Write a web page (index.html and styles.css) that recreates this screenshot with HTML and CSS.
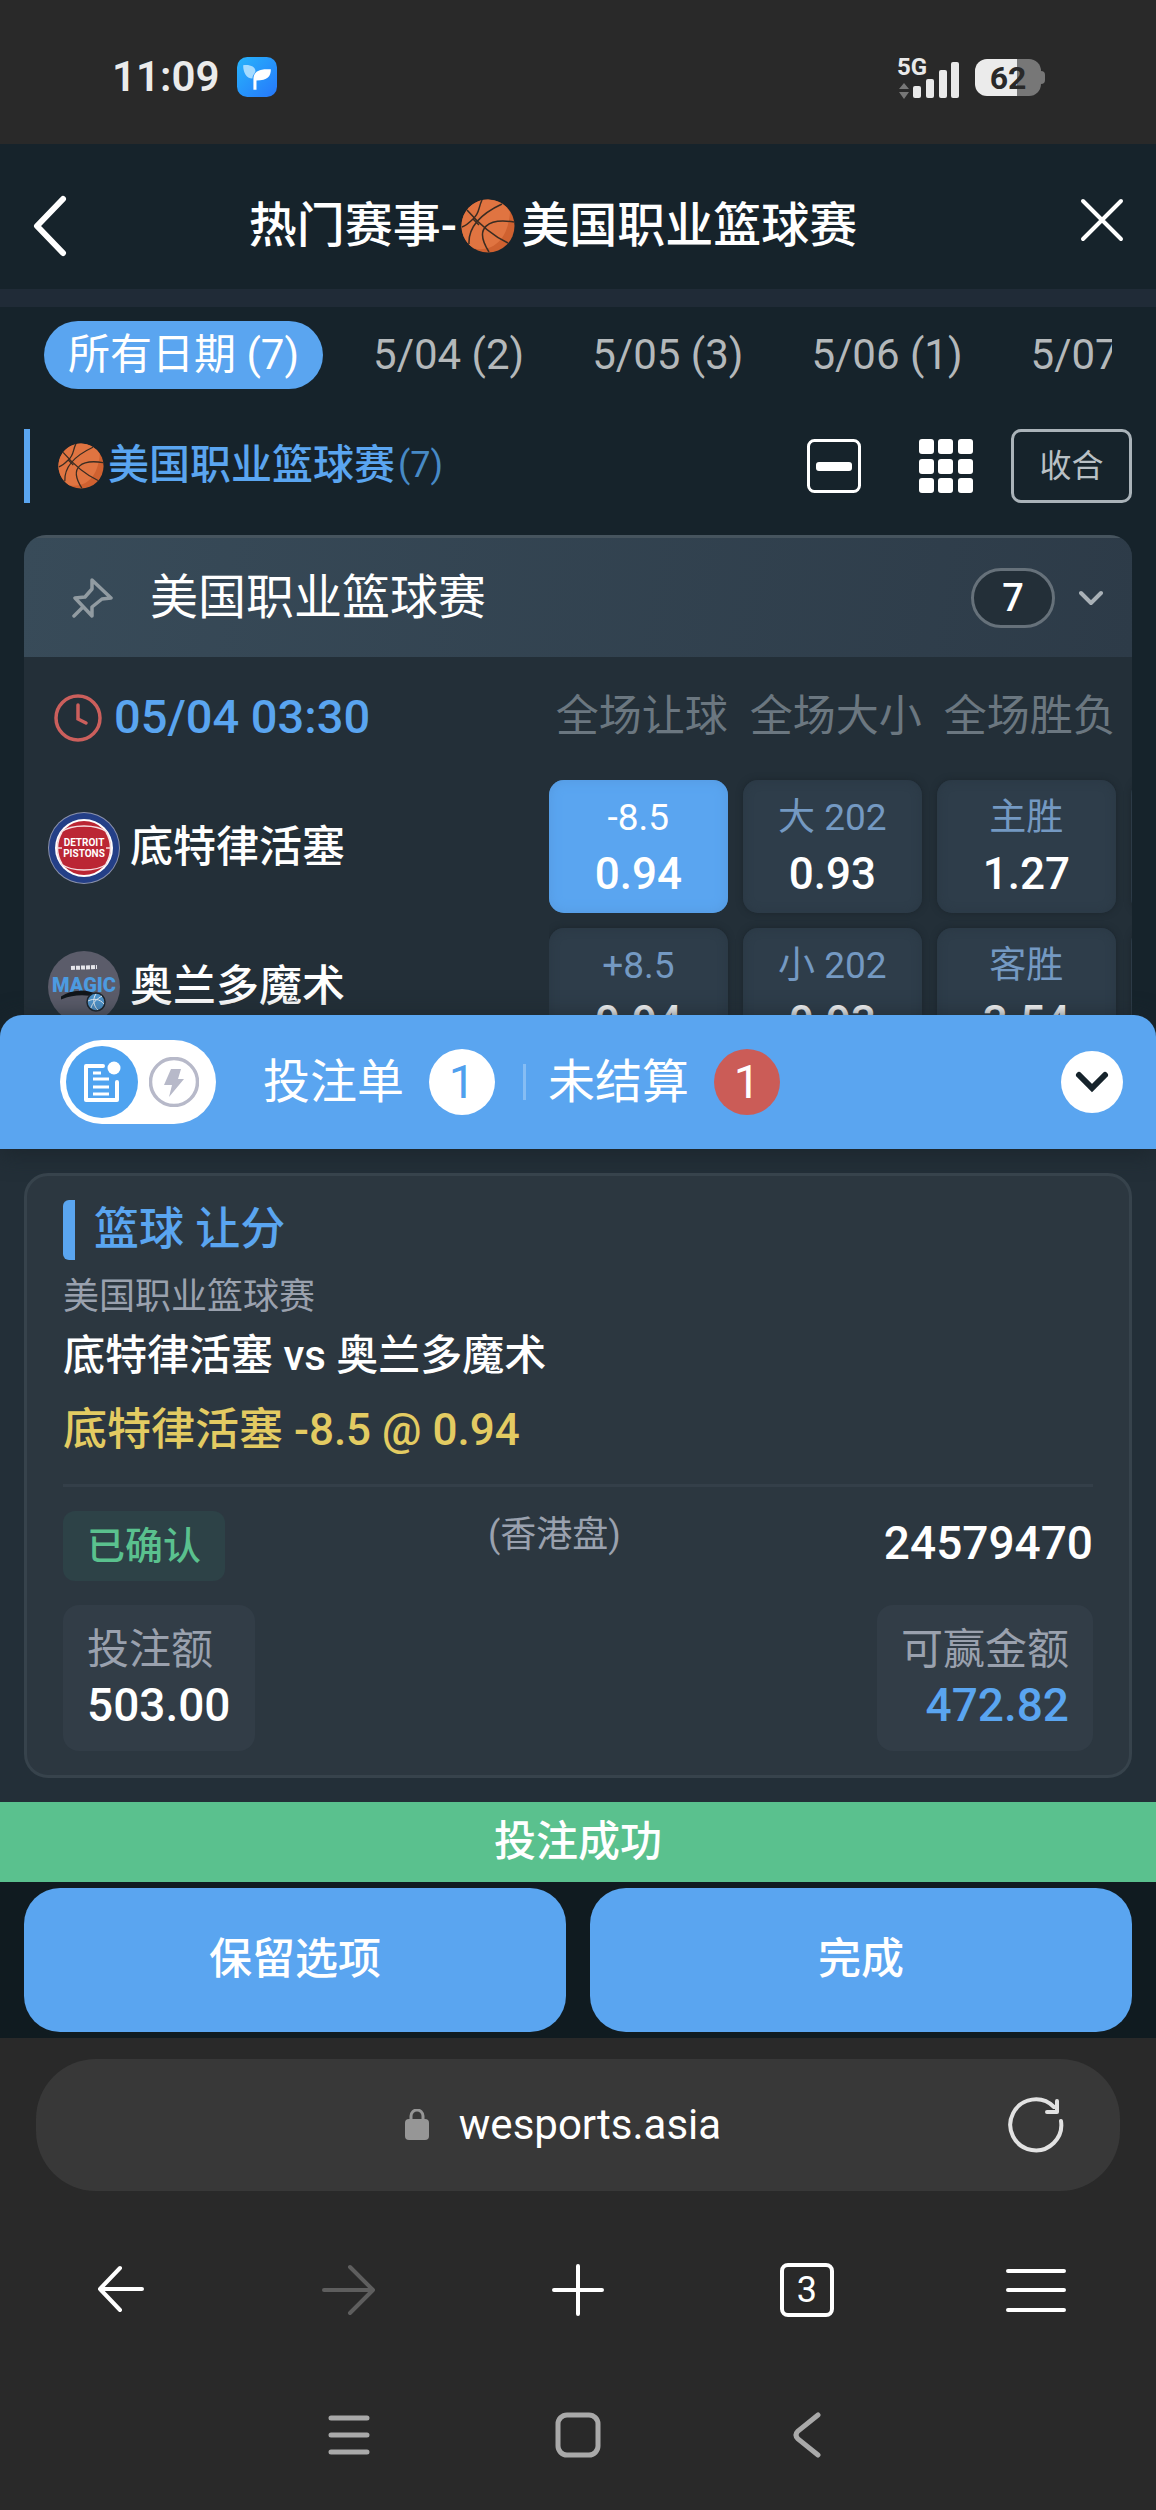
FILE: index.html
```html
<!DOCTYPE html>
<html lang="zh-CN">
<head>
<meta charset="utf-8">
<meta name="viewport" content="width=device-width, initial-scale=1">
<title>热门赛事-美国职业篮球赛</title>
<link rel="stylesheet" href="styles.css">
</head>
<body>
<svg class="defs" aria-hidden="true">
  <symbol id="ball" viewBox="0 0 54 54">
    <circle cx="27" cy="27" r="26.500" fill="#cf6130"/>
    <path d="M27 .5A26.500 26.500 0 0 0 13 49.500C31 53 47 42 49 13A26.500 26.500 0 0 0 27 .5Z" fill="#e07441"/>
    <path d="M6 11C18 25 30 36 47 44M21 1C17 9 19 14 12 20C8 24 4 27 1 28M41 5C26 12 7 25 8 45M53 23C28 19 12 28 28 53M12 20L18 26" fill="none" stroke="#3a2c22" stroke-width="1.500"/>
  </symbol>
</svg>

<div class="phone">
  <div class="status">
    <div class="status-side">
      <span class="clock">11:09</span>
      <svg class="app-icon" viewBox="0 0 39 39">
        <defs><linearGradient id="sky" x1="0" y1="0" x2="1" y2="1"><stop offset="0" stop-color="#27b4fb"/><stop offset="1" stop-color="#2677fb"/></linearGradient></defs>
        <rect width="39" height="39" rx="10" fill="url(#sky)"/>
        <path d="M6 8C12 7 18 9 18 14C17 17 15 18 15 21C9 21 6 15 6 8Z" fill="#a5dbff"/>
        <path d="M33 12C33 19 30 23 19 23V32H16V22C16 15 20 11 33 12Z" fill="#fff"/>
      </svg>
    </div>
    <div class="status-side status-right">
      <svg class="signal" viewBox="0 0 64 44">
        <text x="0" y="19" class="net">5G</text>
        <path d="M7 27L12 33H2ZM7 43L12 36H2Z" fill="#777"/>
        <g fill="#e9e9e9"><rect x="16" y="30" width="8" height="12" rx="2"/><rect x="29" y="23" width="8" height="19" rx="2"/><rect x="42" y="14" width="8" height="28" rx="2"/><rect x="54" y="6" width="8" height="36" rx="2"/></g>
      </svg>
      <div class="battery"><span>62</span></div>
    </div>
  </div>

  <div class="app">
    <header class="head">
      <button class="plain" aria-label="返回"><svg width="36" height="64" viewBox="0 0 36 64"><path d="M31 5L5 32L31 59" fill="none" stroke="#fff" stroke-width="6" stroke-linecap="round" stroke-linejoin="round"/></svg></button>
      <h1>热门赛事-<svg class="ball-l"><use href="#ball"/></svg>美国职业篮球赛</h1>
      <button class="plain close" aria-label="关闭"><svg width="44" height="44" viewBox="0 0 44 44"><path d="M3 3L41 41M41 3L3 41" stroke="#fff" stroke-width="4" stroke-linecap="round"/></svg></button>
    </header>

    <nav class="dates">
      <a href="#all" class="on">所有日期 (7)</a>
      <a href="#d4">5/04 (2)</a>
      <a href="#d5">5/05 (3)</a>
      <a href="#d6">5/06 (1)</a>
      <a href="#d7">5/07 (1)</a>
    </nav>

    <div class="league">
      <h2><svg class="ball-s"><use href="#ball"/></svg>美国职业篮球赛<small>(7)</small></h2>
      <div class="tools">
        <button class="plain" aria-label="收起"><svg width="56" height="56" viewBox="0 0 56 56"><rect x="2.500" y="2.500" width="51" height="51" rx="6" fill="none" stroke="#fff" stroke-width="3"/><rect x="10" y="24" width="36" height="9" rx="3" fill="#fff"/></svg></button>
        <button class="plain" aria-label="网格"><svg width="54" height="54" viewBox="0 0 54 54" fill="#fff"><rect width="15" height="15" rx="3"/><rect x="19" width="15" height="15" rx="3"/><rect x="39" width="15" height="15" rx="3"/><rect y="20" width="15" height="15" rx="3"/><rect x="19" y="20" width="15" height="15" rx="3"/><rect x="39" y="20" width="15" height="15" rx="3"/><rect y="39" width="15" height="15" rx="3"/><rect x="19" y="39" width="15" height="15" rx="3"/><rect x="39" y="39" width="15" height="15" rx="3"/></svg></button>
        <button class="fold">收合</button>
      </div>
    </div>

    <section class="match">
      <div class="match-head">
        <svg width="42" height="42" viewBox="0 0 42 42"><path d="M20 3L39 21L30 22L20 30V39L3 21L13 20L20 12ZM11 30L2 39" fill="none" stroke="#919ba1" stroke-width="3.500" stroke-linejoin="round" stroke-linecap="round"/></svg>
        <h3>美国职业篮球赛</h3>
        <span class="count">7</span>
        <svg width="24" height="16" viewBox="0 0 24 16"><path d="M2 3L12 13L22 3" fill="none" stroke="#a9b1b7" stroke-width="4" stroke-linecap="round" stroke-linejoin="round"/></svg>
      </div>
      <div class="match-body">
        <div class="teams">
          <div class="time"><svg width="48" height="48" viewBox="0 0 48 48" fill="none" stroke="#cb5f5c" stroke-width="3.500" stroke-linecap="round"><circle cx="24" cy="24" r="22"/><path d="M24 11V25L32 29"/></svg>05/04 03:30</div>
          <div class="team">
            <svg class="logo" viewBox="0 0 72 72">
              <circle cx="36" cy="36" r="36" fill="#8b92ad"/><circle cx="36" cy="36" r="35" fill="#243f87"/><circle cx="36" cy="36" r="29" fill="#fff"/><circle cx="36" cy="36" r="27" fill="#bb2634"/>
              <path d="M13 20C24 12 48 12 59 20M13 52C24 60 48 60 59 52M9 36H14M58 36H63M14 20C8 30 8 42 14 52M58 20C64 30 64 42 58 52" fill="none" stroke="#f5dfe2" stroke-width="1.500"/>
              <text x="36" y="34" class="mark">DETROIT</text><text x="36" y="45" class="mark">PISTONS</text>
            </svg>底特律活塞
          </div>
          <div class="team">
            <svg class="logo" viewBox="0 0 72 72">
              <circle cx="36" cy="36" r="36" fill="#5b5c6a"/>
              <path d="M23 17L49 16" stroke="#e5e5ea" stroke-width="4" stroke-dasharray="4 1"/>
              <text x="36" y="41" class="mark magic">MAGIC</text>
              <path d="M14 46C24 39 40 39 49 45C36 42 24 43 14 47Z" fill="#11161b" stroke="#11161b" stroke-width="2"/>
              <circle cx="48" cy="51" r="9" fill="#4f94cc" stroke="#1d252d" stroke-width="1.500"/><path d="M40 50C46 47 52 48 56 53M48 43C44 48 46 56 50 59M54 45C49 48 44 52 43 57" stroke="#e5edf3" fill="none"/>
            </svg>奥兰多魔术
          </div>
        </div>
        <div class="odds">
          <span>全场让球</span><span>全场大小</span><span>全场胜负</span>
          <button class="odd picked"><small>-8.5</small>0.94</button>
          <button class="odd"><small>大 202</small>0.93</button>
          <button class="odd"><small>主胜</small>1.27</button>
          <button class="odd" aria-label="更多"></button>
          <button class="odd"><small>+8.5</small>0.94</button>
          <button class="odd"><small>小 202</small>0.93</button>
          <button class="odd"><small>客胜</small>3.54</button>
          <button class="odd" aria-label="更多"></button>
        </div>
      </div>
    </section>
  </div>

  <section class="sheet">
    <div class="sheet-bar">
      <div class="switch">
        <button class="plain slip" aria-label="投注单"><svg width="72" height="72" viewBox="0 0 72 72"><circle cx="36" cy="36" r="36" fill="#4fa3f0"/><path d="M37 20H20V54H51V36" fill="none" stroke="#fff" stroke-width="4" stroke-linejoin="round" stroke-linecap="round"/><path d="M27 27H35M27 33H43M27 41H43M27 48H43" stroke="#fff" stroke-width="3"/><circle cx="48" cy="22" r="6.500" fill="#fff"/></svg></button>
        <button class="plain" aria-label="快速投注"><svg width="50" height="50" viewBox="0 0 50 50"><circle cx="25" cy="25" r="23.500" fill="none" stroke="#b7b9c9" stroke-width="3.500"/><path d="M22 12H32L29 22H35L20 40L23 28H15Z" fill="#b7b9c9"/></svg></button>
      </div>
      <a href="#slip" class="tab">投注单<b>1</b></a>
      <a href="#open" class="tab open">未结算<b class="red">1</b></a>
      <button class="plain down" aria-label="收起"><svg width="62" height="62" viewBox="0 0 62 62"><circle cx="31" cy="31" r="31" fill="#fff"/><path d="M18 24L31 37L44 24" fill="none" stroke="#16232b" stroke-width="6" stroke-linecap="round"/></svg></button>
    </div>
    <article class="ticket">
      <h3>篮球 让分</h3>
      <p class="lg">美国职业篮球赛</p>
      <p class="vs">底特律活塞 vs 奥兰多魔术</p>
      <p class="bet">底特律活塞 -8.5 @ 0.94</p>
      <div class="row state"><span class="badge">已确认</span><span class="market">(香港盘)</span><span class="num">24579470</span></div>
      <div class="row"><div class="tile">投注额<b>503.00</b></div><div class="tile win">可赢金额<b>472.82</b></div></div>
    </article>
    <div class="toast" role="status">投注成功</div>
    <div class="actions"><button>保留选项</button><button>完成</button></div>
  </section>

  <footer class="browser">
    <div class="url">
      <svg width="24" height="32" viewBox="0 0 24 32"><path d="M6 12V7A6 6 0 0 1 18 7V12" fill="none" stroke="#969696" stroke-width="3"/><rect y="10" width="24" height="21" rx="4" fill="#969696"/></svg>
      <span>wesports.asia</span>
      <button class="plain reload" aria-label="刷新"><svg width="56" height="56" viewBox="0 0 56 56" fill="none" stroke="#e2e2e2" stroke-width="4" stroke-linecap="round"><path d="M53 24A25.500 25.500 0 1 1 46 10"/><path d="M49 4V15H39" stroke-linejoin="round"/></svg></button>
    </div>
    <nav class="keys">
      <button class="plain" aria-label="后退"><svg width="50" height="54" viewBox="0 0 50 54"><path d="M47 26H5M25 5L5 26L25 47" fill="none" stroke="#fff" stroke-width="4" stroke-linecap="round" stroke-linejoin="round"/></svg></button>
      <button class="plain" aria-label="前进"><svg width="56" height="54" viewBox="0 0 56 54"><path d="M3 27H52M29 4L52 27L29 50" fill="none" stroke="#5e5e5e" stroke-width="4" stroke-linecap="round" stroke-linejoin="round"/></svg></button>
      <button class="plain" aria-label="新建"><svg width="54" height="54" viewBox="0 0 54 54"><path d="M27 3V51M3 27H51" stroke="#fff" stroke-width="4" stroke-linecap="round"/></svg></button>
      <button class="plain pages">3</button>
      <button class="plain" aria-label="菜单"><svg width="60" height="46" viewBox="0 0 60 46"><path d="M2 4H58M2 23H58M2 43H58" stroke="#fff" stroke-width="4" stroke-linecap="round"/></svg></button>
    </nav>
    <nav class="keys system">
      <i></i>
      <button class="plain" aria-label="最近任务"><svg width="42" height="42" viewBox="0 0 42 42"><path d="M3 4H39M3 21H39M3 38H39" stroke="#a9a9a9" stroke-width="5" stroke-linecap="round"/></svg></button>
      <button class="plain" aria-label="主页"><svg width="46" height="46" viewBox="0 0 46 46"><rect x="3" y="3" width="40" height="40" rx="9" fill="none" stroke="#a9a9a9" stroke-width="5"/></svg></button>
      <button class="plain" aria-label="上一页"><svg width="30" height="46" viewBox="0 0 30 46"><path d="M26 3L6 19Q2 23 6 27L26 43" fill="none" stroke="#a9a9a9" stroke-width="5" stroke-linecap="round"/></svg></button>
      <i></i>
    </nav>
  </footer>
</div>
</body>
</html>
```

FILE: styles.css
```css
* { box-sizing: border-box; }

body {
  margin: 0;
  background: #292929;
  color: #fff;
  font-family: Roboto, "Noto Sans CJK SC", sans-serif;
  font-size: 42px;
  line-height: 1.2;
}

h1, h2, h3, p { margin: 0; font-weight: 500; }
a { color: inherit; text-decoration: none; }
svg { display: block; flex: none; }
button { font: inherit; color: inherit; border: 0; padding: 0; cursor: pointer; }
.plain { background: none; }
.defs { position: absolute; width: 0; height: 0; }

.phone { display: flex; flex-direction: column; height: 100vh; }

/* Status bar */
.status {
  flex: none;
  display: flex;
  justify-content: space-between;
  align-items: center;
  height: 144px;
  padding: 11px 115px 0 112px;
}
.status-side { display: flex; align-items: center; gap: 18px; }
.status-right { gap: 14px; }
.clock { font-size: 42px; font-weight: 600; color: #ebebeb; }
.app-icon { width: 40px; height: 40px; }
.signal { width: 64px; height: 44px; overflow: visible; }
.net { font-size: 24px; font-weight: 700; fill: #e9e9e9; }
.battery {
  width: 66px;
  height: 37px;
  border-radius: 12px;
  background: linear-gradient(90deg, #ebebeb 64%, #777 64%);
  color: #292929;
  font-size: 32px;
  font-weight: 700;
  line-height: 38px;
  text-align: center;
  position: relative;
}
.battery::after {
  content: "";
  position: absolute;
  left: 100%;
  top: 12px;
  width: 4px;
  height: 13px;
  border-radius: 0 4px 4px 0;
  background: #777;
}

/* Match list */
.app { flex: 1; min-height: 0; overflow: hidden; background: #16232b; }
.head {
  display: flex;
  align-items: center;
  height: 163px;
  padding: 18px 32px 0;
  border-bottom: 18px solid #202b37;
}
.head h1 {
  flex: 1;
  display: flex;
  justify-content: center;
  align-items: center;
  padding-right: 42px;
  font-size: 48px;
}
.close { padding-bottom: 12px; }
.ball-l { width: 54px; height: 54px; margin: 0 6px 0 4px; }
.ball-s { width: 46px; height: 46px; margin-right: 4px; }

.dates {
  display: flex;
  align-items: center;
  gap: 68px;
  margin: 14px 44px 0;
  overflow: hidden;
  white-space: nowrap;
  color: #b4b8ba;
}
.dates .on {
  margin-right: -18px;
  padding: 0 24px;
  border-radius: 34px;
  background: #5aa5f0;
  color: #fff;
  line-height: 68px;
}

.league {
  display: flex;
  justify-content: space-between;
  align-items: center;
  padding: 40px 24px 32px;
}
.league h2 {
  display: flex;
  align-items: center;
  height: 74px;
  padding-left: 28px;
  border-left: 6px solid #5aa5f0;
  color: #5aa5f0;
  font-size: 41px;
}
.league small { font-size: 36px; font-weight: 400; color: #478ac6; padding-left: 3px; }
.tools { display: flex; align-items: center; gap: 57px; }
.fold {
  margin-left: -19px;
  width: 121px;
  height: 74px;
  border: 3px solid #aab3b9;
  border-radius: 10px;
  background: none;
  color: #b9c0c5;
  font-size: 32px;
}

.match {
  margin: 0 24px;
  border-radius: 22px 22px 0 0;
  overflow: hidden;
  background: #232f38;
}
.match-head {
  display: flex;
  align-items: center;
  height: 122px;
  padding: 0 29px 0 48px;
  border-top: 3px solid #46545e;
  background: linear-gradient(100deg, #384b59, #2d3b48);
}
.match-head h3 { flex: 1; padding-left: 36px; font-size: 48px; font-weight: 400; }
.count {
  width: 84px;
  margin-right: 24px;
  border: 3px solid #66717a;
  border-radius: 30px;
  background: #232f38;
  font-size: 38px;
  font-weight: 500;
  line-height: 54px;
  text-align: center;
}
.match-body { display: grid; grid-template-columns: 9fr 10fr; }
.teams { padding: 0 0 0 24px; }
.time {
  display: flex;
  align-items: center;
  gap: 12px;
  height: 121px;
  padding-left: 6px;
  color: #5aa5f0;
  font-size: 47px;
  font-weight: 500;
}
.team {
  display: flex;
  align-items: center;
  gap: 10px;
  height: 139px;
  font-size: 43px;
  font-weight: 500;
}
.logo { width: 72px; height: 72px; }
.mark {
  fill: #fff;
  font-size: 10px;
  font-weight: 700;
  text-anchor: middle;
}
.magic { font-size: 20px; font-weight: 900; fill: #4c9be0; }

.odds {
  display: grid;
  grid-template-columns: repeat(4, 179px);
  grid-template-rows: 108px 133px 133px;
  gap: 15px;
  overflow: hidden;
}
.odds > span {
  color: #6b7780;
  font-size: 43px;
  line-height: 52px;
  padding: 33px 0 0 7px;
  text-align: center;
}
.odds > span:nth-child(3) { grid-column: 3 / span 2; width: 179px; }
.odd {
  display: flex;
  flex-direction: column;
  align-items: center;
  justify-content: center;
  gap: 10px;
  border-radius: 15px;
  background: #2e3d4a;
  box-shadow: 0 0 6px #1c262d, inset 0 0 10px #2a3844;
  font-size: 44px;
  font-weight: 500;
  line-height: 48px;
}
.odd small { font-size: 37px; font-weight: 400; line-height: 44px; color: #7499c2; }
.picked { background: #5aa5f0; box-shadow: inset 0 0 12px #5599df; }
.picked small { color: #fff; }

/* Bet slip */
.sheet { flex: none; position: relative; margin-top: -24px; background: #232f38; border-radius: 24px 24px 0 0; }
.sheet-bar {
  display: flex;
  align-items: center;
  height: 134px;
  padding: 0 33px 0 60px;
  border-radius: 22px 22px 0 0;
  background: #5aa5f0;
  box-shadow: 0 4px 24px #1b252c;
  font-size: 47px;
}
.switch {
  display: flex;
  align-items: center;
  gap: 11px;
  width: 156px;
  padding: 6px;
  border-radius: 42px;
  background: #fff;
}
.tab { display: flex; align-items: center; gap: 25px; margin-left: 47px; }
.tab b {
  width: 66px;
  border-radius: 33px;
  background: #fff;
  color: #4fa0ee;
  font-weight: 400;
  line-height: 66px;
  text-align: center;
}
.open { margin-left: 28px; }
.open::before { content: ""; width: 3px; height: 36px; margin-right: -3px; background: #86bdf4; }
.tab .red { background: #cb5c57; color: #fff; }
.down { margin-left: auto; }

.ticket {
  margin: 24px;
  padding: 24px 36px;
  border: 3px solid #37434c;
  border-radius: 24px;
  background: #2c3740;
}
.ticket h3 {
  padding-left: 19px;
  border-left: 12px solid #5aa5f0;
  border-radius: 6px 0 0 6px;
  color: #5aa5f0;
  font-size: 45px;
  line-height: 60px;
}
.lg { margin-top: 12px; color: #9aa1ae; font-size: 36px; font-weight: 400; line-height: 50px; }
.vs { margin-top: 6px; line-height: 56px; }
.bet {
  padding: 15px 0 23px;
  border-bottom: 3px solid #343f49;
  color: #e3cb62;
  font-size: 44px;
  line-height: 62px;
}
.row { display: flex; justify-content: space-between; align-items: flex-start; margin-top: 24px; }
.badge {
  padding: 0 24px;
  border-radius: 12px;
  background: #2d4247;
  color: #5ac18e;
  font-size: 38px;
  font-weight: 500;
  line-height: 70px;
}
.market { color: #9aa1ae; font-size: 36px; line-height: 48px; }
.num { font-size: 46px; font-weight: 500; line-height: 64px; }
.tile {
  padding: 18px 24px;
  border-radius: 16px;
  background: #323d47;
  color: #9aa1ae;
  line-height: 54px;
}
.tile b { display: block; color: #fff; font-size: 46px; font-weight: 500; line-height: 56px; }
.win { text-align: right; }
.tile.win b { color: #5aa5f0; }

.toast { background: #5ac18e; font-weight: 500; line-height: 80px; text-align: center; }
.actions { display: grid; grid-template-columns: 1fr 1fr; gap: 24px; padding: 6px 24px; background: #101b20; }
.actions button {
  height: 144px;
  border-radius: 36px;
  background: #5aa5f0;
  font-size: 43px;
  font-weight: 500;
}

/* Browser and system bars */
.browser { flex: none; padding-top: 21px; }
.url {
  display: flex;
  justify-content: center;
  align-items: center;
  gap: 30px;
  position: relative;
  height: 132px;
  margin: 0 36px;
  padding-right: 30px;
  border-radius: 60px;
  background: #383838;
}
.reload { position: absolute; right: 56px; top: 38px; }
.keys {
  display: grid;
  grid-template-columns: repeat(5, 1fr);
  align-items: center;
  justify-items: center;
  height: 198px;
  padding: 0 6px;
}
.pages {
  width: 54px;
  height: 54px;
  border: 4px solid #fff;
  border-radius: 8px;
  font-size: 36px;
  line-height: 46px;
}
.system { height: 121px; padding-bottom: 29px; }
```
